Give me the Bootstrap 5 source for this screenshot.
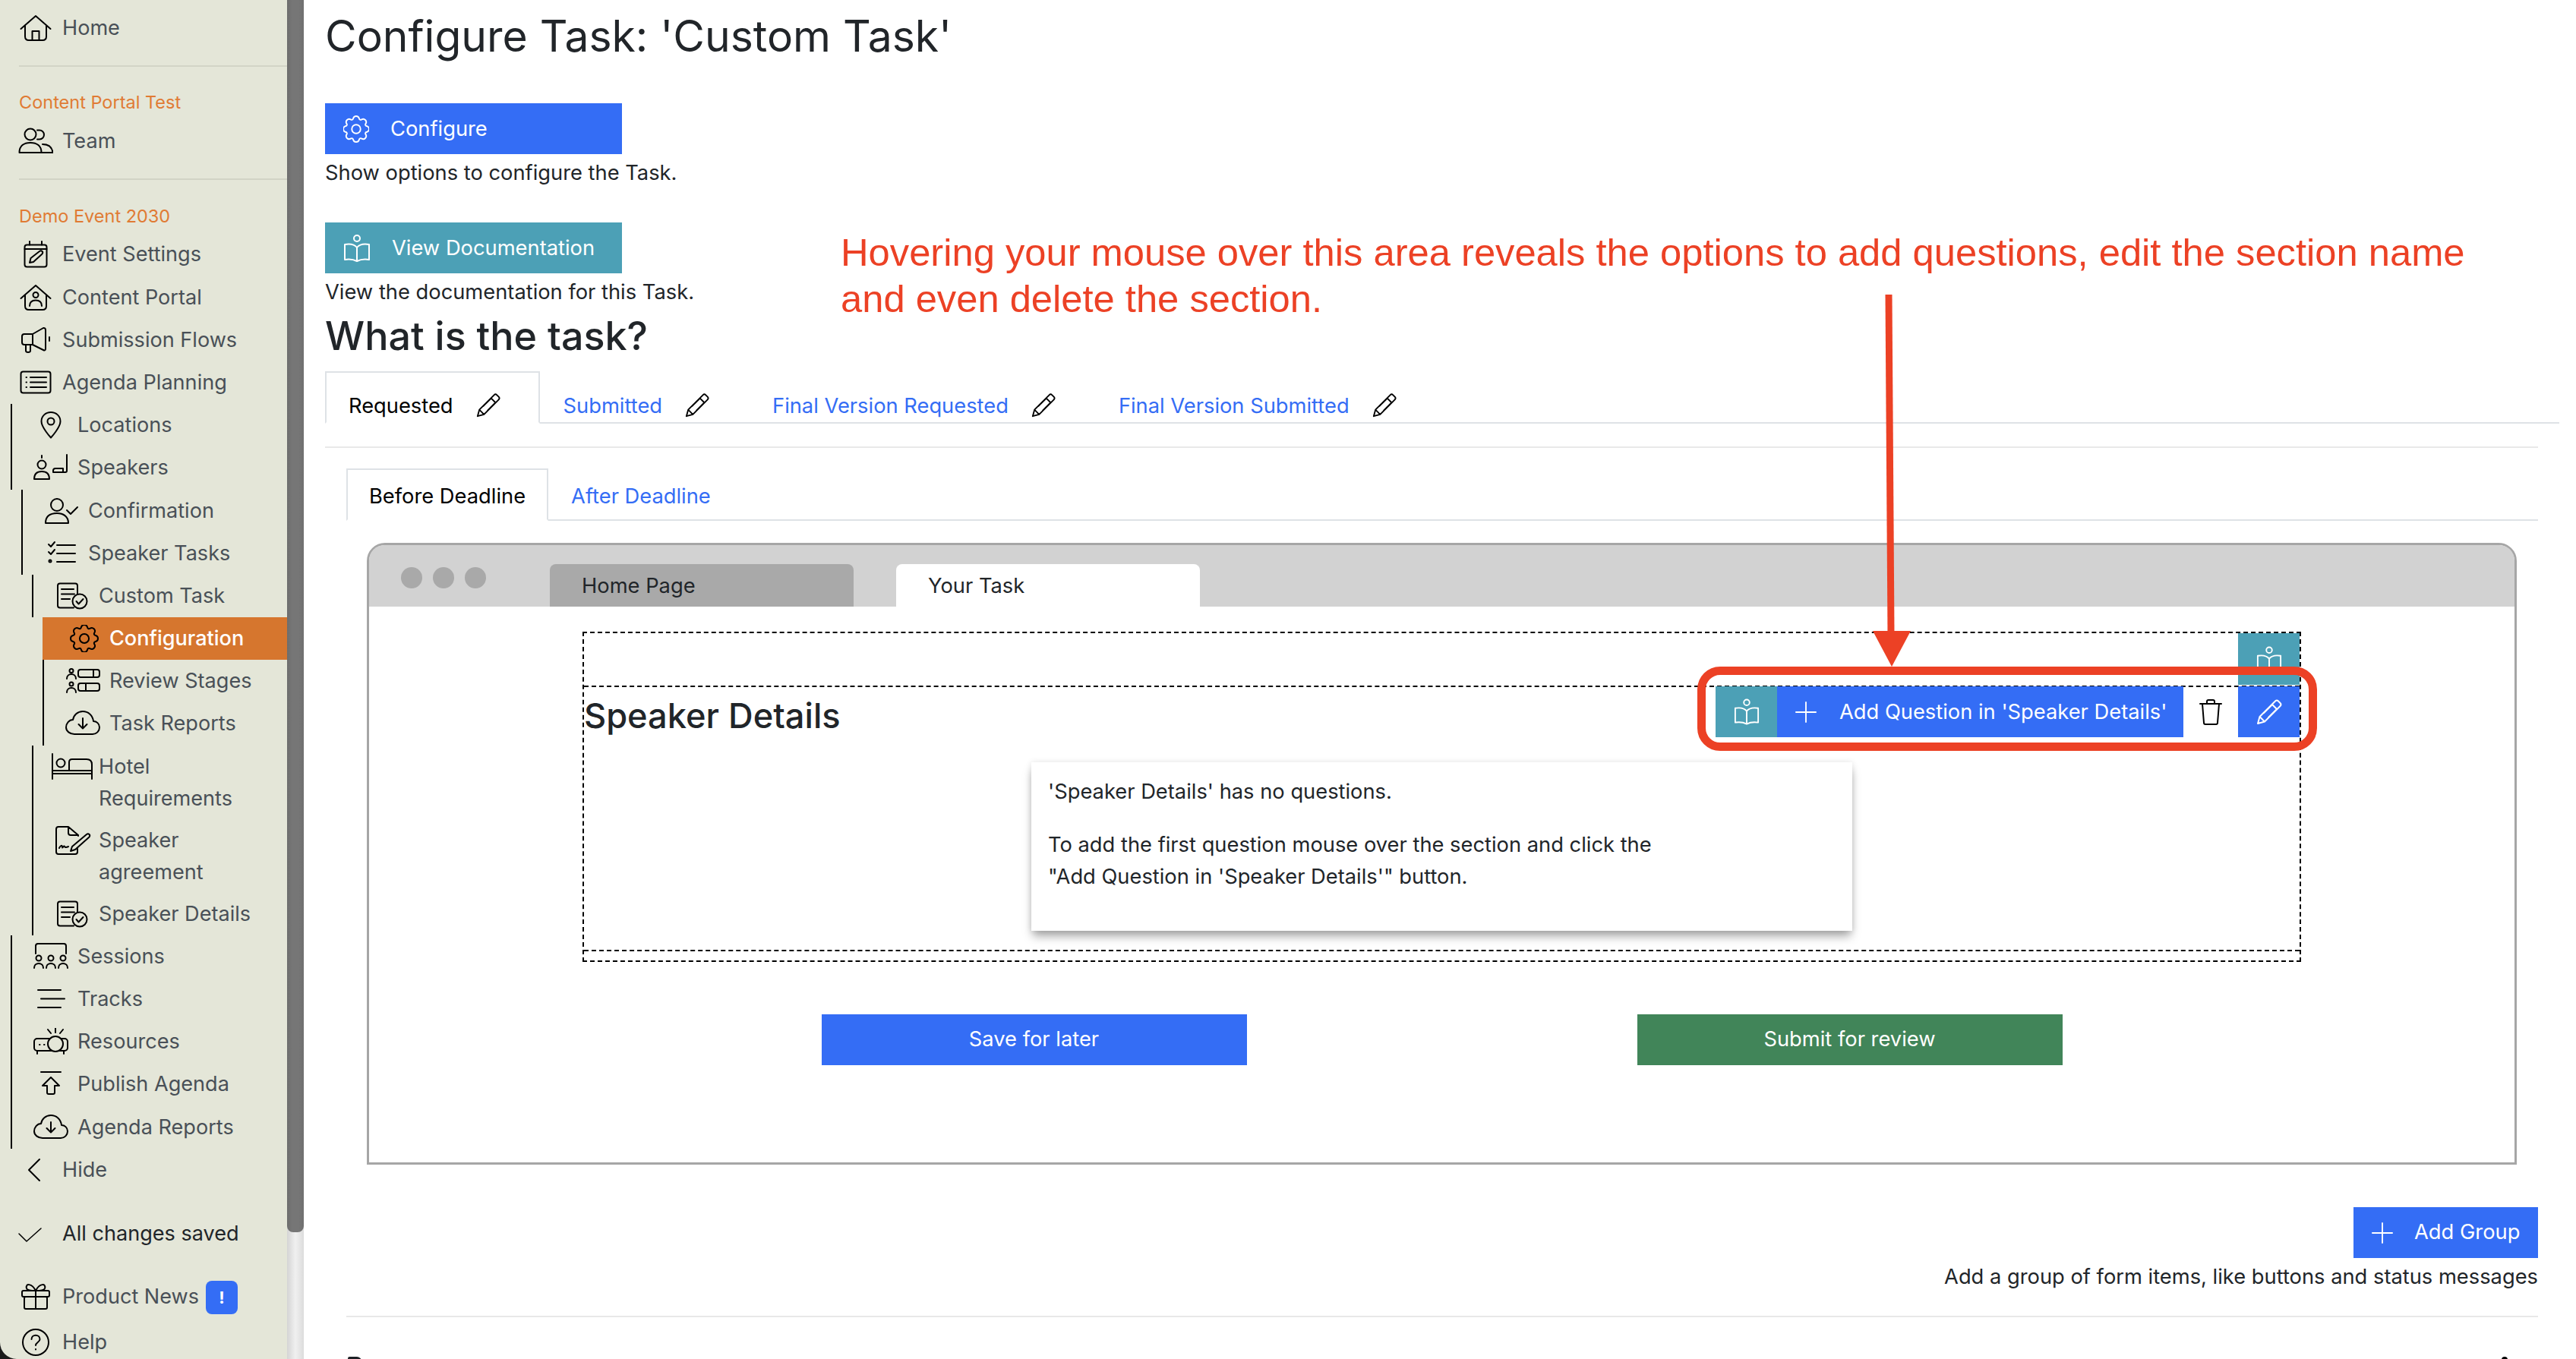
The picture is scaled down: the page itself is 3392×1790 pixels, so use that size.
<!DOCTYPE html>
<html lang="en">
<head>
<meta charset="utf-8">
<title>Configure Task</title>
<link rel="stylesheet" href="https://cdn.jsdelivr.net/npm/bootstrap@5.3.0/dist/css/bootstrap.min.css">
<style>
html,body{height:1790px;overflow:hidden;background:#fff}
body{font-family:Inter,"Liberation Sans",sans-serif;font-size:27.3px;line-height:42px;color:#212529}
svg{fill:none;stroke:currentColor;stroke-width:2;stroke-linecap:round;stroke-linejoin:round;flex:none}
.gearic{stroke-width:.9}
.sidewrap{width:400px;flex:none;height:1790px;background:#1a1a1a}
.sidepane{width:378px;height:1790px;background:#e4e6d8;padding-top:9px;overflow:hidden;border-bottom-left-radius:22px}
.scb{width:22px;height:1790px;background:linear-gradient(90deg,#d4d4d4,#f0f0f0 50%,#dcdcdc)}
.thumb{height:1623px;background:linear-gradient(90deg,#6d6d6d,#767676 30%,#767676 70%,#6f6f6f);border-radius:0 0 8px 8px}
.nv{display:flex;align-items:flex-start;padding:7px 0 7px 24px;min-height:56.2px;color:#495057;line-height:42px;font-size:27.1px}
.ic{width:46px;height:36px;margin:3px 12px 0 0;color:#000}
.ic.wd{width:54px;margin-left:-4px;margin-right:8px}
.ic.wd2{width:50px;height:40px;margin-left:-2px;margin-right:10px;margin-top:1px}
.d1,.d2,.d3,.d4{padding-left:28px;border-left:2px solid #000}
.d1{margin-left:14px}.d2{margin-left:28px}.d3{margin-left:42px}.d4{margin-left:56px}
.two{padding-bottom:6px;min-height:0}
.nv.act{background:#d6762e;color:#fff;font-weight:500;border-left:0;padding-left:32px}
.nv.act .ic{margin-right:10px}
.dvd{margin:21px 0 0 25px;height:2px;background:#d2d4c6}
.grp{color:#e07b34;font-size:23.5px;line-height:36px;padding-left:25px;margin-top:29px;margin-bottom:5px}
.grp.ev{margin-top:30px;margin-bottom:4px}
.gap-a{margin-top:28px}.gap-b{margin-top:27px}.gap-c{margin-top:2px}
.svd{color:#212529}
.bdg{display:inline-flex;align-items:center;justify-content:center;width:42px;height:44px;margin-left:9px;background:#346df5;color:#fff;border-radius:8px;font-size:22px;font-weight:700;line-height:1}
.prim{position:relative;height:1790px;overflow:hidden;padding:14px 50px 0 28px}
.ttl{font-size:57px;font-weight:400;line-height:67px;margin:0 0 55px}
.wbtn{width:391px;height:67px;border:0;border-radius:0;color:#fff;font-size:27.3px;padding:2px 0 0 24px;display:flex;align-items:center;justify-content:flex-start}
.wbtn svg{margin:-2px 28px 0 0}
.blu,.blu:hover{background:#346df5;color:#fff}
.tea,.tea:hover{background:#4ca0b6;color:#fff}
.grn,.grn:hover{background:#418559;color:#fff}
.hlp{margin:4px 0 0;height:42px}
.hlp.sp{margin-bottom:44px}
.sub2{font-size:52px;font-weight:500;line-height:56px;margin:9px 0 18px}
.tabs-x{--bs-nav-tabs-border-width:2px;--bs-nav-tabs-border-color:#dee2e6;--bs-nav-tabs-border-radius:0;--bs-nav-tabs-link-active-color:#000;--bs-nav-tabs-link-active-border-color:#dee2e6 #dee2e6 #fff;--bs-nav-link-color:#346df5;height:69px;flex-wrap:nowrap}
.tabs-x .nav-link{height:69px;padding:5px 29px 0;display:flex;align-items:center;color:#346df5;font-size:27.3px}
.tabs-x .nav-link.active{color:#000}
.tabs-x svg{width:34px;height:34px;margin:-2px 20px 0 29px;color:#000}
.tabs-a{margin-right:-28px}
.tabs-a .nav-link{padding-top:22px}
.rule{height:2px;background:#e9e9e9;margin-top:30px}
.in-tabs{margin:27px 0 29px 28px}
.in-tabs .nav-link{padding-left:28px;padding-right:28px}
.frm{margin-left:55px;width:2831px;border:3px solid #a6a6a6;border-radius:24px 24px 0 0;padding-bottom:128px}
.frm-top{height:81px;background:#d2d2d2;border-radius:20px 20px 0 0;padding:25px 0 0 42px}
.dot{width:28px;height:28px;border-radius:50%;background:#a9a9a9;margin-right:14px;margin-top:4px;flex:none}
.ftab{width:400px;height:56px;border-radius:8px 8px 0 0;background:#a9a9a9;padding:8px 0 0 42px;margin-left:70px}
.ftab.on{background:#fff;margin-left:56px}
.dash-o{position:relative;margin:33px 281px 0 281px;height:435px;border:2px dashed #000;padding-top:69px}
.dash-i{position:relative;height:350px;border-top:2px dashed #000;border-bottom:2px dashed #000}
.dash-i h3{font-size:45.2px;font-weight:500;line-height:56px;margin:0;padding:10px 0 0}
.empt{width:1081px;height:222px;margin:33px auto 0;border:0;border-radius:0;background:#fff;box-shadow:0 9px 12px -2px rgba(0,0,0,.35),0 0 8px rgba(0,0,0,.1);padding:18px 22px}
.empt p{margin:0 0 28px}
.acts{position:absolute;right:0;top:-1px;height:67px;display:flex;align-items:stretch}
.acts .sq{width:81px;display:flex;align-items:center;justify-content:center;color:#fff}
.acts .mid{width:535px;display:flex;align-items:center;color:#fff;padding-left:24px}
.acts .mid svg{margin-right:30px}
.acts .bin{width:72px;display:flex;align-items:center;justify-content:center;color:#000}
.topteal{position:absolute;right:0;top:0;width:81px;height:68px;display:flex;align-items:center;justify-content:center;color:#fff}
.go-row{gap:514px;margin-top:69px}
.go-row .btn{width:560px;height:67px;border:0;border-radius:0;font-size:27.3px;display:flex;align-items:center;justify-content:center}
.add-wrap{margin-top:56px}
.addb{width:243px;height:67px;border:0;border-radius:0;font-size:27.3px;padding:0 0 0 24px;display:flex;align-items:center}
.addb svg{margin-right:28px}
.add-t{text-align:right;margin:4px 0 0;height:42px}
.rule-b{height:2px;background:#e8e8e8;margin:30px 0 0 28px}
.stubs{margin:52px 40px 0 30px}
.stub{width:18px;height:6px;background:#1d2126;border-radius:3px 8px 0 0}
.stub.r{width:8px;background:#000;border-radius:4px 4px 0 0}
.fade{position:absolute;left:0;right:0;bottom:0;height:56px;background:linear-gradient(90deg,rgba(0,0,0,.06),rgba(0,0,0,.05) 80%,rgba(0,0,0,0));-webkit-mask-image:linear-gradient(180deg,transparent,#000);mask-image:linear-gradient(180deg,transparent,#000);pointer-events:none}
.note{position:absolute;left:707px;top:302px;font-family:"Liberation Sans",Arial,sans-serif;font-size:50.7px;line-height:61px;color:#ec4125;white-space:nowrap}
.ring{position:absolute;left:1835px;top:878px;width:816px;height:111px;border:11px solid #ec4125;border-radius:30px;pointer-events:none}
.arw{position:absolute;left:2060px;top:380px;width:60px;height:505px;color:#ec4125}
.arw line{stroke-width:9;stroke-linecap:butt}
.arw polygon{fill:#ec4125;stroke:none}
</style>
</head>
<body class="d-flex">
<svg width="0" height="0" class="position-absolute">
<defs>
<symbol id="i-home" viewBox="0 0 46 36"><path d="M3.5 19 23 2l19.500 17M9 15v14q0 5 5 5h18q5 0 5-5V15M18.500 34V22h9v12"/></symbol>
<symbol id="i-team" viewBox="0 0 46 36"><circle cx="16" cy="9" r="7.500"/><path d="M25 3.500h3a6 6 0 0 1 0 12h-3M1.500 33c0-9 6-13 14.500-13s14.500 4 14.500 13zM32 22c7 0 12.500 3 13.500 11H32"/></symbol>
<symbol id="i-cal" viewBox="0 0 46 36"><rect x="8.500" y="5.500" width="29" height="29" rx="3"/><path d="M8.500 11h29M15 1v4.500M31 1v4.500M15 29l1.500-6L28 14q2-1.500 3.500 0t0 3.500L20 28z"/></symbol>
<symbol id="i-portal" viewBox="0 0 46 36"><path d="M3.500 19 23 2l19.500 17M9 15v14q0 5 5 5h18q5 0 5-5V15M15 29c0-6 4-7.500 8-7.500s8 1.500 8 7.500"/><circle cx="23" cy="14.500" r="3.500"/></symbol>
<symbol id="i-mega" viewBox="0 0 46 36"><path d="M19 10 33 2q3-.5 3 3v24q0 3.500-3 2l-14-7H8q-3 0-3-3v-8q0-3 3-3zM19 10v14M10 24v8q0 2 3 2t3-2v-7M41 14v5"/></symbol>
<symbol id="i-list" viewBox="0 0 46 36"><rect x="3.500" y="3.500" width="39" height="28" rx="3"/><path d="M16 11h21M16 17.500h21M16 24h21M10.500 11h.5M10.500 17.500h.5M10.500 24h.5"/></symbol>
<symbol id="i-pin" viewBox="0 0 46 36"><path d="M23 1c-7 0-12.500 5-12.500 12C10.500 21 23 34.500 23 34.500S35.500 21 35.500 13C35.500 6 30 1 23 1z"/><circle cx="23" cy="13" r="4.500"/></symbol>
<symbol id="i-spk" viewBox="0 0 46 36"><circle cx="11" cy="14" r="5.500"/><path d="M1 33c0-7 4-10 10-10s10 3 10 10zM11 2v3M44 1v21q0 2-2 2H26v-2q0-3 3-3h10v5"/></symbol>
<symbol id="i-conf" viewBox="0 0 46 36"><circle cx="17" cy="10" r="8"/><path d="M2 34c0-10 7-13 15-13s15 4 15 13zM30 17l5 5 9-9"/></symbol>
<symbol id="i-tasks" viewBox="0 0 46 36"><path d="M6 6l3 3 5-6M6 16l3 3 5-6M17 7h24M17 18h24M17 29h24"/><circle cx="8" cy="28" r="1.500"/></symbol>
<symbol id="i-doc" viewBox="0 0 46 36"><path d="M25 33.500H7q-3 0-3-3v-26q0-3 3-3h20q3 0 3 3V15M9 9h16M9 15.500h17M9 22h11"/><circle cx="33" cy="25" r="9.500"/><path d="M28.500 25l3 3.500 6-6.500"/></symbol>
<symbol id="i-gear" viewBox="0 0 16 16"><circle cx="8" cy="8" r="2.700"/><path d="M9.796 1.343c-.527-1.790-3.065-1.790-3.592 0l-.094.319a.873.873 0 0 1-1.255.52l-.292-.16c-1.640-.892-3.433.902-2.540 2.541l.159.292a.873.873 0 0 1-.52 1.255l-.319.094c-1.790.527-1.790 3.065 0 3.592l.319.094a.873.873 0 0 1 .52 1.255l-.16.292c-.892 1.640.901 3.434 2.541 2.540l.292-.159a.873.873 0 0 1 1.255.52l.094.319c.527 1.790 3.065 1.790 3.592 0l.094-.319a.873.873 0 0 1 1.255-.52l.292.16c1.640.893 3.434-.902 2.540-2.541l-.159-.292a.873.873 0 0 1 .52-1.255l.319-.094c1.790-.527 1.790-3.065 0-3.592l-.319-.094a.873.873 0 0 1-.52-1.255l.16-.292c.893-1.640-.902-3.433-2.541-2.540l-.292.159a.873.873 0 0 1-1.255-.52z"/></symbol>
<symbol id="i-rev" viewBox="0 0 46 36"><circle cx="8" cy="4.500" r="2.500"/><circle cx="8" cy="22" r="2.500"/><path d="M2 15c0-4 3-6 6-6s6 2 6 6M2 33c0-4 3-6 6-6s6 2 6 6"/><rect x="17" y="3" width="28" height="10" rx="3"/><rect x="17" y="21" width="28" height="10" rx="3"/><path d="M37 3v10M27 21v10"/></symbol>
<symbol id="i-cloud" viewBox="0 0 46 36"><path d="M12 32h24c5 0 9-4 9-9s-4-8-8-8C36 7 30 2 23 2S11 7 10 13c-5 0-9 5-9 10s5 9 11 9zM23 11v13M17.500 19l5.500 5.500 5.500-5.500"/></symbol>
<symbol id="i-bed" viewBox="0 0 54 36"><path d="M1 1v33M1 23h52M1 27h52M53 15v19M23 23V12q0-4 4-4h19q7 0 7 7v8"/><circle cx="12" cy="13" r="5.500"/></symbol>
<symbol id="i-sign" viewBox="0 0 50 40"><path d="M33 14V13L20 2H7Q4 2 4 5v30q0 3 3 3h22q3 0 3-3v-4M20 2v8q0 3 3 3h10M8 30c2-4 4-4 4-1 0 2 2-3 3-1s3 1 5 0M25 28 44 12q2-1.500 3.500 0t0 3.500L29 32l-6 2z"/></symbol>
<symbol id="i-sess" viewBox="0 0 46 36"><path d="M3 14V4q0-3 3-3h34q3 0 3 3v10M1 33c0-4 3-6 6-6s6 2 6 6M17 33c0-4 3-6 6-6s6 2 6 6M33 33c0-4 3-6 6-6s6 2 6 6"/><circle cx="7" cy="20" r="3.500"/><circle cx="23" cy="20" r="3.500"/><circle cx="39" cy="20" r="3.500"/></symbol>
<symbol id="i-trk" viewBox="0 0 46 36"><path d="M6 6h30M10 17.500h31M6 29h30"/></symbol>
<symbol id="i-res" viewBox="0 0 46 36"><rect x="1" y="14" width="44" height="16" rx="4"/><circle cx="29" cy="21" r="10" fill="#e4e6d8"/><path d="M5 30v4M40 30v4M29 0v6M19 2l4 5M39 2l-4 5M8 22h.5M14 22h.5"/></symbol>
<symbol id="i-pub" viewBox="0 0 46 36"><path d="M10 2h26M23 9 12 20h6v9q0 2 2 2h6q2 0 2-2v-9h6z"/></symbol>
<symbol id="i-chev" viewBox="0 0 46 36"><path d="M28 4 14 18l14 14"/></symbol>
<symbol id="i-ok" viewBox="0 0 46 36"><path d="M1 18l10 10 19-17" stroke-width="1.500"/></symbol>
<symbol id="i-gift" viewBox="0 0 46 36"><rect x="5" y="10" width="36" height="8" rx="2"/><rect x="8" y="18" width="30" height="16" rx="2"/><path d="M23 10v24M23 10C18 0 9 0 11 7c1 3 6 3 12 3 6 0 11 0 12-3 2-7-7-7-12 3z"/></symbol>
<symbol id="i-help" viewBox="0 0 46 36"><circle cx="23" cy="18" r="17"/><path d="M17.500 14c0-7 11-7 11 0 0 4-5.500 4-5.500 8M23 27v.5"/></symbol>
<symbol id="i-book" viewBox="0 0 36 36"><circle cx="18" cy="5" r="4"/><path d="M18 17C14 12 8 12 2 13v20c6-1 12 0 16 2 4-2 10-3 16-2V13c-6-1-12-1-16 4zM18 17v18"/></symbol>
<symbol id="i-plus" viewBox="0 0 30 30"><path d="M15 1v28M1 15h28"/></symbol>
<symbol id="i-bin" viewBox="0 0 30 36"><path d="M1 7h28M10 7V4q0-2 2-2h6q2 0 2 2v3M4 7l2 25q0 2 2 2h14q2 0 2-2l2-25"/></symbol>
<symbol id="i-pen" viewBox="0 0 36 36"><path d="M3 33l2.500-9L26 3.500q2-2 4 0l2.500 2.500q2 2 0 4L12 30.500zM5.500 24l6.500 6.500M11 19 22 8M17 25 28 14M22 8l6 6"/></symbol>
</defs>
</svg>

<aside class="sidewrap d-flex">
<nav class="sidepane">
<div class="nv"><svg class="ic"><use href="#i-home"/></svg><span>Home</span></div>
<div class="dvd"></div>
<div class="grp">Content Portal Test</div>
<div class="nv"><svg class="ic"><use href="#i-team"/></svg><span>Team</span></div>
<div class="dvd"></div>
<div class="grp ev">Demo Event 2030</div>
<div class="nv"><svg class="ic"><use href="#i-cal"/></svg><span>Event Settings</span></div>
<div class="nv"><svg class="ic"><use href="#i-portal"/></svg><span>Content Portal</span></div>
<div class="nv"><svg class="ic"><use href="#i-mega"/></svg><span>Submission Flows</span></div>
<div class="nv"><svg class="ic"><use href="#i-list"/></svg><span>Agenda Planning</span></div>
<div class="nv d1"><svg class="ic"><use href="#i-pin"/></svg><span>Locations</span></div>
<div class="nv d1"><svg class="ic"><use href="#i-spk"/></svg><span>Speakers</span></div>
<div class="nv d2"><svg class="ic"><use href="#i-conf"/></svg><span>Confirmation</span></div>
<div class="nv d2"><svg class="ic"><use href="#i-tasks"/></svg><span>Speaker Tasks</span></div>
<div class="nv d3"><svg class="ic"><use href="#i-doc"/></svg><span>Custom Task</span></div>
<div class="nv d4 act"><svg class="ic gearic"><use href="#i-gear"/></svg><span>Configuration</span></div>
<div class="nv d4"><svg class="ic"><use href="#i-rev"/></svg><span>Review Stages</span></div>
<div class="nv d4"><svg class="ic"><use href="#i-cloud"/></svg><span>Task Reports</span></div>
<div class="nv d3 two"><svg class="ic wd"><use href="#i-bed"/></svg><span>Hotel<br>Requirements</span></div>
<div class="nv d3 two"><svg class="ic wd2"><use href="#i-sign"/></svg><span>Speaker<br>agreement</span></div>
<div class="nv d3"><svg class="ic"><use href="#i-doc"/></svg><span>Speaker Details</span></div>
<div class="nv d1"><svg class="ic"><use href="#i-sess"/></svg><span>Sessions</span></div>
<div class="nv d1"><svg class="ic"><use href="#i-trk"/></svg><span>Tracks</span></div>
<div class="nv d1"><svg class="ic"><use href="#i-res"/></svg><span>Resources</span></div>
<div class="nv d1"><svg class="ic"><use href="#i-pub"/></svg><span>Publish Agenda</span></div>
<div class="nv d1"><svg class="ic"><use href="#i-cloud"/></svg><span>Agenda Reports</span></div>
<div class="nv"><svg class="ic"><use href="#i-chev"/></svg><span>Hide</span></div>
<div class="nv svd gap-a"><svg class="ic"><use href="#i-ok"/></svg><span>All changes saved</span></div>
<div class="nv gap-b"><svg class="ic"><use href="#i-gift"/></svg><span>Product News</span><span class="bdg">!</span></div>
<div class="nv gap-c"><svg class="ic"><use href="#i-help"/></svg><span>Help</span></div>
</nav>
<div class="scb"><div class="thumb"></div></div>
</aside>

<main class="prim flex-grow-1">
<h1 class="ttl">Configure Task: 'Custom Task'</h1>
<button class="btn wbtn blu"><svg class="gearic" width="34" height="36"><use href="#i-gear"/></svg>Configure</button>
<p class="hlp sp">Show options to configure the Task.</p>
<button class="btn wbtn tea"><svg width="36" height="36"><use href="#i-book"/></svg>View Documentation</button>
<p class="hlp">View the documentation for this Task.</p>
<h2 class="sub2">What is the task?</h2>
<ul class="nav nav-tabs tabs-x tabs-a">
<li class="nav-item"><a class="nav-link active" href="#">Requested<svg><use href="#i-pen"/></svg></a></li>
<li class="nav-item"><a class="nav-link" href="#">Submitted<svg><use href="#i-pen"/></svg></a></li>
<li class="nav-item"><a class="nav-link" href="#">Final Version Requested<svg><use href="#i-pen"/></svg></a></li>
<li class="nav-item"><a class="nav-link" href="#">Final Version Submitted<svg><use href="#i-pen"/></svg></a></li>
</ul>
<div class="rule"></div>
<ul class="nav nav-tabs tabs-x in-tabs">
<li class="nav-item"><a class="nav-link active" href="#">Before Deadline</a></li>
<li class="nav-item"><a class="nav-link" href="#">After Deadline</a></li>
</ul>
<section class="frm">
<div class="frm-top d-flex">
<span class="dot"></span><span class="dot"></span><span class="dot"></span>
<div class="ftab">Home Page</div>
<div class="ftab on">Your Task</div>
</div>
<div class="dash-o">
<div class="topteal tea"><svg width="34" height="35"><use href="#i-book"/></svg></div>
<div class="dash-i">
<h3>Speaker Details</h3>
<div class="acts">
<div class="sq tea"><svg width="34" height="35"><use href="#i-book"/></svg></div>
<div class="mid blu"><svg width="28" height="28"><use href="#i-plus"/></svg>Add Question in 'Speaker Details'</div>
<div class="bin"><svg width="30" height="36"><use href="#i-bin"/></svg></div>
<div class="sq blu"><svg width="36" height="36"><use href="#i-pen"/></svg></div>
</div>
<div class="card empt">
<p>'Speaker Details' has no questions.</p>
<p class="mb-0">To add the first question mouse over the section and click the<br>"Add Question in 'Speaker Details'" button.</p>
</div>
</div>
</div>
<div class="d-flex justify-content-center go-row">
<button class="btn blu">Save for later</button>
<button class="btn grn">Submit for review</button>
</div>
</section>
<div class="d-flex justify-content-end add-wrap"><button class="btn addb blu"><svg width="28" height="28"><use href="#i-plus"/></svg>Add Group</button></div>
<p class="add-t">Add a group of form items, like buttons and status messages</p>
<div class="rule-b"></div>
<div class="d-flex justify-content-between stubs"><span class="stub"></span><span class="stub r"></span></div>
<div class="fade"></div>
<div class="note">Hovering your mouse over this area reveals the options to add questions, edit the section name<br>and even delete the section.</div>
<svg class="arw" viewBox="0 0 60 505"><line x1="27" y1="8" x2="30" y2="455"/><polygon points="6,451 56,451 31,498"/></svg>
<div class="ring"></div>
</main>
<script src="https://cdn.jsdelivr.net/npm/bootstrap@5.3.0/dist/js/bootstrap.bundle.min.js"></script>
</body>
</html>
